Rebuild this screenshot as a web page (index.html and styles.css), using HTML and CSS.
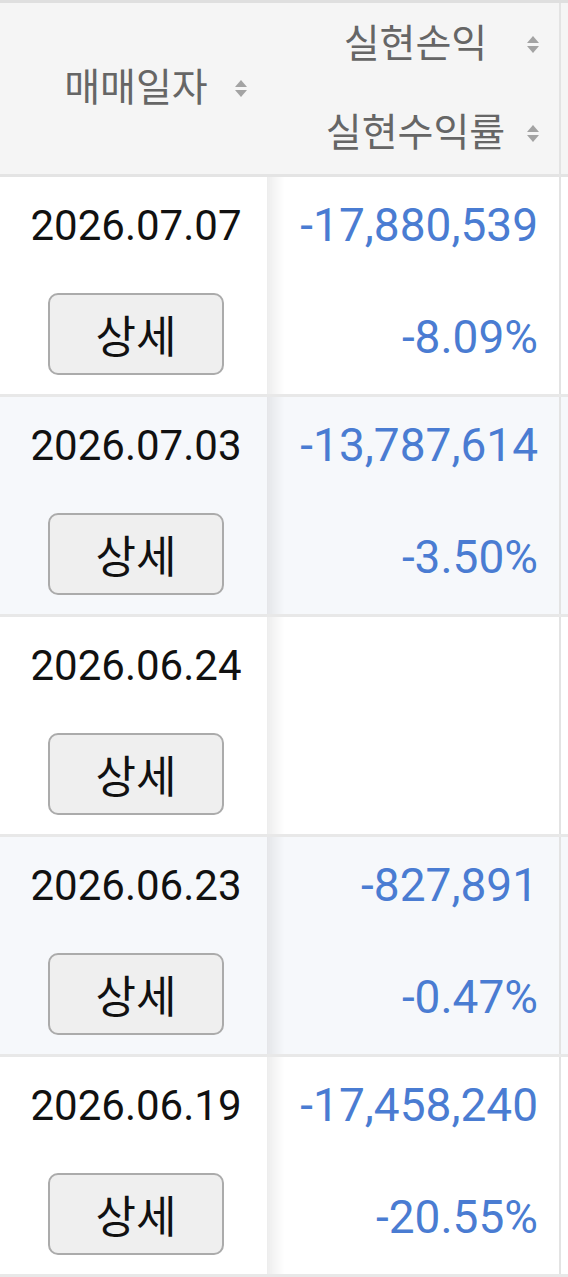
FILE: index.html
```html
<!DOCTYPE html>
<html lang="ko">
<head>
<meta charset="utf-8">
<title>매매일지</title>
<link rel="stylesheet" href="styles.css">
</head>
<body>
<div class="wrap">
<table class="grid">
  <colgroup>
    <col class="c1"><col class="c2"><col class="c3">
  </colgroup>
  <thead>
    <tr>
      <th class="h1">
        <div class="hcell">
          <div class="hline">매매일자<svg class="sort" viewBox="0 0 12 18"><path d="M6 0L12 7H0Z"/><path d="M0 10H12L6 17Z"/></svg></div>
        </div>
      </th>
      <th class="h2">
        <div class="hcell">
          <div class="hline">실현손익<svg class="sort" viewBox="0 0 12 18"><path d="M6 0L12 7H0Z"/><path d="M0 10H12L6 17Z"/></svg></div>
          <div class="hline">실현수익률<svg class="sort" viewBox="0 0 12 18"><path d="M6 0L12 7H0Z"/><path d="M0 10H12L6 17Z"/></svg></div>
        </div>
      </th>
      <th class="h3"></th>
    </tr>
  </thead>
  <tbody>
    <tr>
      <td class="d1"><div class="cell"><div class="date">2026.07.07</div><div class="act"><button class="btn">상세</button></div></div></td>
      <td class="d2"><div class="cell"><div class="val">-17,880,539</div><div class="val">-8.09%</div></div></td>
      <td class="d3"></td>
    </tr>
    <tr class="alt">
      <td class="d1"><div class="cell"><div class="date">2026.07.03</div><div class="act"><button class="btn">상세</button></div></div></td>
      <td class="d2"><div class="cell"><div class="val">-13,787,614</div><div class="val">-3.50%</div></div></td>
      <td class="d3"></td>
    </tr>
    <tr>
      <td class="d1"><div class="cell"><div class="date">2026.06.24</div><div class="act"><button class="btn">상세</button></div></div></td>
      <td class="d2"><div class="cell"><div class="val"></div><div class="val"></div></div></td>
      <td class="d3"></td>
    </tr>
    <tr class="alt">
      <td class="d1"><div class="cell"><div class="date">2026.06.23</div><div class="act"><button class="btn">상세</button></div></div></td>
      <td class="d2"><div class="cell"><div class="val">-827,891</div><div class="val">-0.47%</div></div></td>
      <td class="d3"></td>
    </tr>
    <tr>
      <td class="d1"><div class="cell"><div class="date">2026.06.19</div><div class="act"><button class="btn">상세</button></div></div></td>
      <td class="d2"><div class="cell"><div class="val">-17,458,240</div><div class="val">-20.55%</div></div></td>
      <td class="d3"></td>
    </tr>
  </tbody>
</table>
</div>
</body>
</html>
```
FILE: styles.css
```css
html, body {
  margin: 0;
  padding: 0;
  background: #ffffff;
}
body {
  font-family: Roboto, "Noto Sans CJK KR", sans-serif;
  overflow: hidden;
}
.wrap {
  width: 568px;
  overflow: hidden;
}
.grid {
  border-collapse: collapse;
  table-layout: fixed;
  width: 760px;
}
.c1 { width: 267px; }
.c2 { width: 293px; }
.c3 { width: 200px; }

.grid th {
  background: #f5f5f5;
  border-top: 3px solid #dfdfdf;
  border-bottom: 3px solid #e4e4e4;
  padding: 0;
  font-weight: 400;
  color: #666666;
  font-size: 39px;
  vertical-align: middle;
}
.hcell {
  height: 171px;
  display: flex;
  flex-direction: column;
  justify-content: center;
}
.hline {
  position: relative;
  height: 89px;
  line-height: 89px;
  text-align: center;
  padding-left: 5px;
}
.sort {
  position: absolute;
  right: 20px;
  top: 36px;
  width: 12px;
  height: 18px;
  fill: #a3a3a3;
}
.h2, .d2 {
  border-right: 2px solid #e3e3e3;
  background-image: linear-gradient(to right, rgba(0,0,0,0.07), rgba(0,0,0,0) 18px);
}
.grid td {
  padding: 0;
  border-bottom: 3px solid #e8e8e8;
  vertical-align: top;
}
.alt td {
  background-color: #f6f8fb;
}
.cell {
  height: 217px;
  display: grid;
  grid-template-rows: 96px 121px;
  align-items: center;
}
.date {
  text-align: center;
  font-size: 42px;
  color: #111111;
  padding-left: 5px;
}
.act {
  text-align: center;
  padding-left: 5px;
}
.btn {
  width: 176px;
  height: 82px;
  border: 2px solid #ababab;
  border-radius: 10px;
  background: #efefef;
  font-family: "Noto Sans CJK KR", sans-serif;
  font-size: 44px;
  color: #111111;
  padding: 0;
}
.val {
  text-align: right;
  padding-right: 21px;
  font-size: 46px;
  color: #4a7cd2;
}
.d2 .val:last-child {
  padding-top: 6px;
}
```
